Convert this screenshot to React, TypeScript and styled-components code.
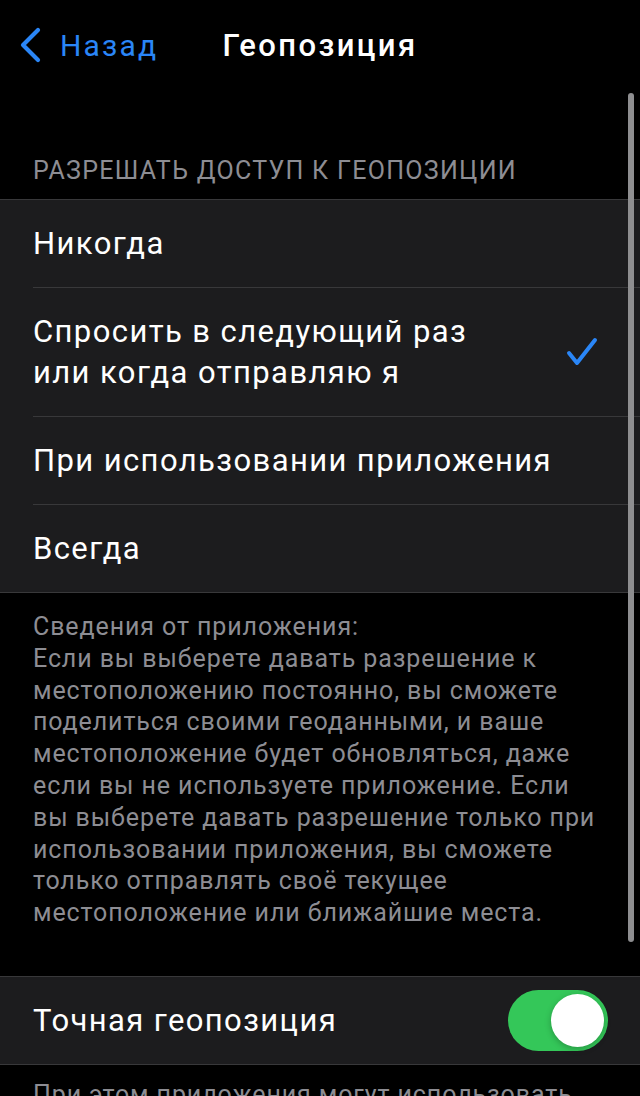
import styled, { createGlobalStyle } from 'styled-components';

const GlobalStyle = createGlobalStyle`
  html, body {
    margin: 0;
    padding: 0;
    background: #000000;
  }
  body {
    font-family: Roboto, "Noto Sans", sans-serif;
    -webkit-font-smoothing: antialiased;
  }
`;

const options = [
  { id: 'never', label: 'Никогда' },
  { id: 'ask', label: 'Спросить в следующий раз\nили когда отправляю я' },
  { id: 'using', label: 'При использовании приложения' },
  { id: 'always', label: 'Всегда' },
];

const selected = 'ask';

const aboutText = [
  'Сведения от приложения:',
  'Если вы выберете давать разрешение к',
  'местоположению постоянно, вы сможете',
  'поделиться своими геоданными, и ваше',
  'местоположение будет обновляться, даже',
  'если вы не используете приложение. Если',
  'вы выберете давать разрешение только при',
  'использовании приложения, вы сможете',
  'только отправлять своё текущее',
  'местоположение или ближайшие места.',
].join('\n');

const Screen = styled.div`
  position: relative;
  width: 640px;
  height: 1096px;
  overflow: hidden;
  background: #000000;
  color: #ffffff;
`;

const NavBar = styled.div`
  display: grid;
  grid-template-columns: 1fr auto 1fr;
  align-items: center;
  height: 90px;
  padding: 0 18px;
  box-sizing: border-box;
`;

const BackButton = styled.div`
  display: flex;
  align-items: center;
  gap: 18px;
  color: #2a86f7;
  font-size: 30px;
  letter-spacing: 2.2px;
`;

const Title = styled.div`
  font-size: 31px;
  font-weight: 500;
  letter-spacing: 2.4px;
`;

const SectionHeader = styled.div`
  padding: 66px 33px 13px;
  font-size: 25px;
  line-height: 30px;
  color: #8d8d93;
  letter-spacing: 1.3px;
`;

const Group = styled.div`
  background: #1c1c1e;
  border-top: 1px solid #38383a;
  border-bottom: 1px solid #38383a;
`;

const Row = styled.div<{ $last?: boolean }>`
  display: flex;
  align-items: center;
  justify-content: space-between;
  margin-left: 33px;
  padding: 23px 42px 23px 0;
  border-bottom: ${(p) => (p.$last ? 'none' : '1px solid #38383a')};
`;

const RowLabel = styled.div`
  font-size: 31px;
  line-height: 41px;
  white-space: pre-line;
  letter-spacing: 1.4px;
`;

const Footer = styled.div<{ $top: number }>`
  padding: ${(p) => p.$top}px 33px 0;
  font-size: 25px;
  line-height: 31.8px;
  color: #8d8d93;
  letter-spacing: 0.9px;
  white-space: pre-line;
`;

const Spacer = styled.div<{ $h: number }>`
  height: ${(p) => p.$h}px;
`;

const ToggleRow = styled(Row)`
  padding: 13px 32px 13px 0;
`;

const Switch = styled.div<{ $on: boolean }>`
  position: relative;
  width: 100px;
  height: 61px;
  border-radius: 31px;
  background: ${(p) => (p.$on ? '#34c759' : '#39393d')};
  flex-shrink: 0;
`;

const Knob = styled.div`
  position: absolute;
  top: 4px;
  right: 4px;
  width: 53px;
  height: 53px;
  border-radius: 50%;
  background: #ffffff;
  box-shadow: 0 2px 6px rgba(0, 0, 0, 0.25);
`;

const ScrollIndicator = styled.div`
  position: absolute;
  top: 93px;
  left: 628px;
  width: 6px;
  height: 849px;
  border-radius: 3px;
  background: #8e8e90;
`;

const Chevron = () => (
  <svg width="24" height="36" viewBox="0 0 24 36" fill="none">
    <path
      d="M20 3 L5 18 L20 33"
      stroke="#2a86f7"
      strokeWidth="4.2"
      strokeLinecap="round"
      strokeLinejoin="round"
    />
  </svg>
);

const Check = () => (
  <svg width="32" height="30" viewBox="0 0 32 30" fill="none">
    <path
      d="M3 16 L11 26 L29 3"
      stroke="#2a86f7"
      strokeWidth="4"
      strokeLinecap="round"
      strokeLinejoin="round"
    />
  </svg>
);

const App = () => {
  return (
    <Screen>
      <GlobalStyle />
      <NavBar>
        <BackButton>
          <Chevron />
          Назад
        </BackButton>
        <Title>Геопозиция</Title>
        <div />
      </NavBar>

      <SectionHeader>РАЗРЕШАТЬ ДОСТУП К ГЕОПОЗИЦИИ</SectionHeader>
      <Group>
        {options.map((o, i) => (
          <Row key={o.id} $last={i === options.length - 1}>
            <RowLabel>{o.label}</RowLabel>
            {o.id === selected && <Check />}
          </Row>
        ))}
      </Group>

      <Footer $top={18}>{aboutText}</Footer>

      <Spacer $h={47} />
      <Group>
        <ToggleRow $last>
          <RowLabel>Точная геопозиция</RowLabel>
          <Switch $on>
            <Knob />
          </Switch>
        </ToggleRow>
      </Group>

      <Footer $top={14}>
        {'При этом приложения могут использовать\nваше точное местоположение.'}
      </Footer>

      <ScrollIndicator />
    </Screen>
  );
};

export default App;
